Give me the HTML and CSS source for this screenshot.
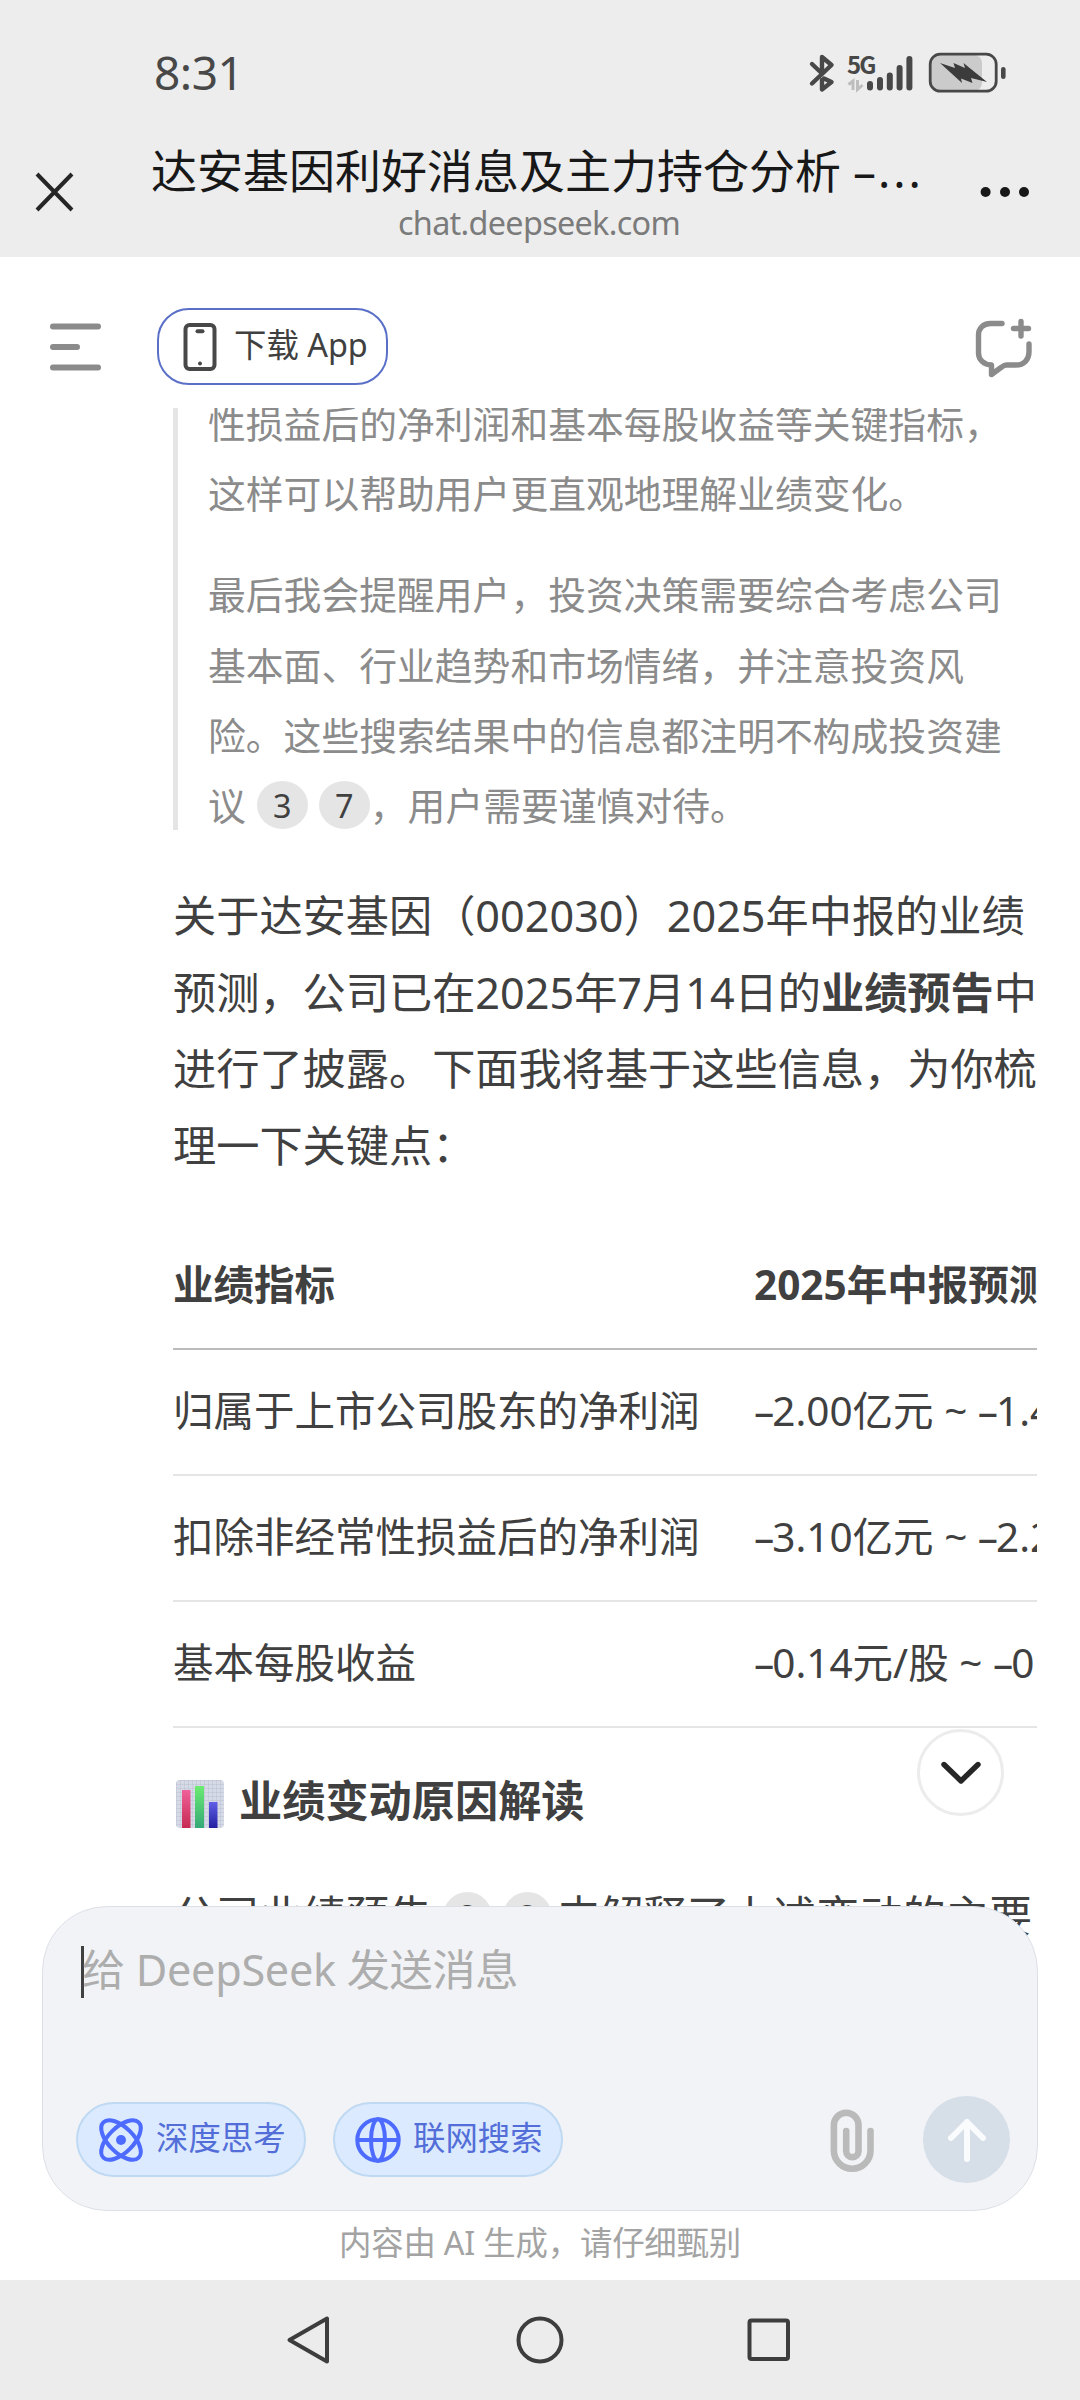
FILE: index.html
```html
<!DOCTYPE html>
<html lang="zh-CN">
<head>
    <meta charset="UTF-8">
    <meta name="viewport" content="width=device-width, initial-scale=1.0">
    <title>达安基因利好消息及主力持仓分析 - DeepSeek</title>
    <link rel="stylesheet" href="styles.css">
</head>
<body>
    <div class="phone">
        <header class="browser-header">
            <div class="status-bar">
                <span class="clock">8:31</span>
                <div class="status-icons">
                    <svg class="bluetooth" width="26" height="38" viewBox="0 0 26 38" fill="none" stroke="#484848" stroke-width="4.4" stroke-linecap="round" stroke-linejoin="round">
                        <path d="M3 10 13 19.500 13 3 22.500 11 3 29.500"/>
                        <path d="M15 24.500 22.500 28 13 35.500V26"/>
                    </svg>
                    <div class="network">
                        <span class="network-type">5G</span>
                        <svg width="66" height="38" viewBox="0 0 66 38" fill="none">
                            <path d="M6 36V27L1.500 30.500M10.500 26V35.500L15.500 31" stroke="#bdbdbd" stroke-width="3"/>
                            <path d="M23 30V33.500M33 26V33.500M42.800 21.500V33.500M52.600 14V33.500M62.400 5V33.500" stroke="#484848" stroke-width="6" stroke-linecap="round"/>
                        </svg>
                    </div>
                    <svg class="battery" width="80" height="42" viewBox="0 0 80 42">
                        <rect x="3" y="3" width="51" height="36" rx="8" fill="#cbcbcb"/>
                        <rect x="2.200" y="2.200" width="66" height="37" rx="10" fill="none" stroke="#484848" stroke-width="2.800"/>
                        <rect x="73" y="15" width="4.600" height="12" rx="2.300" fill="#484848"/>
                        <path d="M12 11 27 16 25.500 11 37 16 35.500 11 59 30 43 26 44.500 31 33 26.500 34 31Z" fill="#3b3b3b"/>
                    </svg>
                </div>
            </div>
            <div class="title-bar">
                <svg class="close" width="40" height="40" viewBox="0 0 40 40" stroke="#262626" stroke-width="4">
                    <path d="M2 2 37 38M37 2 2 38"/>
                </svg>
                <div class="page-title">
                    <h1>达安基因利好消息及主力持仓分析 –<span class="dots">...</span></h1>
                    <p>chat.deepseek.com</p>
                </div>
                <svg class="more" width="50" height="12" viewBox="0 0 50 12" fill="#181818">
                    <circle cx="6.600" cy="6" r="5"/>
                    <circle cx="26" cy="6" r="5"/>
                    <circle cx="45" cy="6" r="5"/>
                </svg>
            </div>
        </header>

        <main>
            <div class="toolbar">
                <svg class="menu" width="52" height="50" viewBox="0 0 52 50" stroke="#8b8b8b" stroke-width="6" stroke-linecap="round">
                    <path d="M3 4.500H48M3 25H27M3 45.500H48"/>
                </svg>
                <button class="download">
                    <svg width="34" height="50" viewBox="0 0 34 50" fill="none" stroke="#484848" stroke-width="4">
                        <rect x="2.500" y="3" width="29" height="44" rx="4"/>
                        <path d="M14.500 9.300H19.500" stroke-linecap="round"/>
                        <circle cx="17" cy="41.500" r="2" fill="#484848" stroke="none"/>
                    </svg>
                    <span>下载 App</span>
                </button>
                <svg class="new-chat" width="60" height="62" viewBox="0 0 60 62" fill="none" stroke="#8b8b8b" stroke-width="5.400" stroke-linecap="round" stroke-linejoin="round">
                    <path d="M27 6.500H15.500C8 6.500 3.500 11.500 3.500 18V36C3.500 43 9 47.500 16.500 48V57.500L26 50.500C28 49 29 48 31.500 48H41C49 48 54 42.500 54 35V27"/>
                    <path d="M46 4.500V19M38.500 11.500H53.500"/>
                </svg>
            </div>

            <div class="chat">
                <blockquote>
                    <p>性损益后的净利润和基本每股收益等关键指标，<br>这样可以帮助用户更直观地理解业绩变化。</p>
                    <p>最后我会提醒用户，投资决策需要综合考虑公司<br>基本面、行业趋势和市场情绪，并注意投资风<br>险。这些搜索结果中的信息都注明不构成投资建<br>议<span class="cite">3</span><span class="cite">7</span>，用户需要谨慎对待。</p>
                </blockquote>

                <p class="answer">关于达安基因（002030）2025年中报的业绩<br>预测，公司已在2025年7月14日的<strong>业绩预告</strong>中<br>进行了披露。下面我将基于这些信息，为你梳<br>理一下关键点：</p>

                <div class="table-scroll">
                    <table>
                        <thead>
                            <tr><th>业绩指标</th><th>2025年中报预测</th></tr>
                        </thead>
                        <tbody>
                            <tr><td>归属于上市公司股东的净利润</td><td><i>–</i>2.00亿元 ~ <i>–</i>1.4</td></tr>
                            <tr><td>扣除非经常性损益后的净利润</td><td><i>–</i>3.10亿元 ~ <i>–</i>2.2</td></tr>
                            <tr><td>基本每股收益</td><td><i>–</i>0.14元/股 ~ <i>–</i>0</td></tr>
                        </tbody>
                    </table>
                </div>

                <h3>
                    <svg width="48" height="48" viewBox="0 0 48 48">
                        <defs>
                            <linearGradient id="red" x2="0" y2="1"><stop stop-color="#f0609a"/><stop offset="1" stop-color="#c62a52"/></linearGradient>
                            <linearGradient id="green" x2="0" y2="1"><stop stop-color="#6cec70"/><stop offset="1" stop-color="#35a878"/></linearGradient>
                            <linearGradient id="blue" x2="0" y2="1"><stop stop-color="#6060e8"/><stop offset="1" stop-color="#2420a0"/></linearGradient>
                            <pattern id="squares" width="4" height="4" patternUnits="userSpaceOnUse"><path d="M0 0H4M0 0V4" stroke="#b9c0d0"/></pattern>
                        </defs>
                        <rect width="48" height="48" rx="4" fill="#d6dae6"/>
                        <rect width="48" height="48" rx="4" fill="url(#squares)"/>
                        <rect x="6" y="10" width="8.500" height="38" fill="url(#red)"/>
                        <rect x="19" y="6" width="9" height="42" fill="url(#green)"/>
                        <rect x="33" y="22" width="8.500" height="26" fill="url(#blue)"/>
                    </svg>
                    <span>业绩变动原因解读</span>
                </h3>

                <p class="answer reasons">公司业绩预告<span class="cite">2</span><span class="cite">3</span>中解释了上述变动的主要</p>
            </div>

            <button class="scroll-down">
                <svg width="44" height="28" viewBox="0 0 44 28" fill="none" stroke="#262626" stroke-width="5.400" stroke-linecap="round" stroke-linejoin="round">
                    <path d="M5 5.500 22 22 39 5.500"/>
                </svg>
            </button>

            <footer class="composer">
                <div class="input-box">
                    <div class="placeholder">给 DeepSeek 发送消息</div>
                    <div class="actions">
                        <button class="chip">
                            <svg width="46" height="46" viewBox="0 0 46 46" fill="none" stroke="#4d6bfe" stroke-width="4">
                                <ellipse cx="23" cy="23" rx="25" ry="12.500" transform="rotate(45 23 23)"/>
                                <ellipse cx="23" cy="23" rx="25" ry="12.500" transform="rotate(-45 23 23)"/>
                                <circle cx="23" cy="23" r="5" fill="#4d6bfe" stroke="none"/>
                            </svg>
                            <span>深度思考</span>
                        </button>
                        <button class="chip">
                            <svg width="46" height="46" viewBox="0 0 46 46" fill="none" stroke="#4d6bfe" stroke-width="4">
                                <circle cx="23" cy="23" r="20.700"/>
                                <ellipse cx="23" cy="23" rx="7" ry="20.700"/>
                                <path d="M2 23H44"/>
                            </svg>
                            <span>联网搜索</span>
                        </button>
                        <svg class="attach" width="46" height="64" viewBox="0 0 46 64" fill="none" stroke="#bababa" stroke-width="6.600" stroke-linecap="round">
                            <path d="M41.500 23V42.500A18.300 18.300 0 0 1 4.900 42.500V17A12.300 12.300 0 0 1 29.500 17V43A6 6 0 0 1 17.200 43V23"/>
                        </svg>
                        <button class="send">
                            <svg width="40" height="46" viewBox="0 0 40 46" fill="none" stroke="#fafbfc" stroke-width="6" stroke-linecap="round" stroke-linejoin="round">
                                <path d="M20 42V5M4 21 20 5 36 21"/>
                            </svg>
                        </button>
                    </div>
                </div>
                <p class="notice">内容由 AI 生成，请仔细甄别</p>
            </footer>
        </main>

        <nav class="system-nav">
            <svg width="48" height="52" viewBox="0 0 48 52" fill="none" stroke="#3d3d3d" stroke-width="4" stroke-linejoin="round">
                <path d="M4.500 26 42 4.500V47.500Z"/>
            </svg>
            <svg width="48" height="52" viewBox="0 0 48 52" fill="none" stroke="#3d3d3d" stroke-width="4">
                <circle cx="24" cy="26" r="21.500"/>
            </svg>
            <svg width="48" height="52" viewBox="0 0 48 52" fill="none" stroke="#3d3d3d" stroke-width="4">
                <rect x="2.500" y="6.500" width="38.500" height="38.500" rx="2"/>
            </svg>
        </nav>
    </div>
</body>
</html>
```

FILE: styles.css
```css
:root {
    --text: #404040;
    --muted: #8b8b8b;
    --line: #e5e5e5;
    --bar: #ededed;
    --primary: #4d6bfe;
}

* {
    box-sizing: border-box;
    margin: 0;
    padding: 0;
}

body {
    font-family: 'Noto Sans', 'Noto Sans CJK SC', sans-serif;
    color: var(--text);
    background: #fff;
}

svg {
    display: block;
    flex-shrink: 0;
    overflow: visible;
}

button {
    font: inherit;
    color: inherit;
    background: none;
    border: none;
}

.phone {
    width: 1080px;
    height: 2400px;
    display: flex;
    flex-direction: column;
    overflow: hidden;
}

/* status bar + browser title */
.browser-header {
    height: 257px;
    background: var(--bar);
}

.status-bar {
    height: 140px;
    padding: 6px 72px 0 154px;
    display: flex;
    align-items: center;
    justify-content: space-between;
}

.clock {
    margin-bottom: 2px;
    font-size: 46px;
    line-height: 60px;
    color: #484848;
    letter-spacing: -0.5px;
}

.status-icons {
    display: flex;
    align-items: center;
}

.network {
    position: relative;
    margin: 0 15px 0 12px;
}

.network-type {
    position: absolute;
    top: -3px;
    left: 0;
    font: 700 24px/26px 'Noto Sans CJK SC', sans-serif;
    letter-spacing: -2px;
    color: #484848;
}

.title-bar {
    height: 117px;
    display: flex;
    align-items: flex-start;
    padding-left: 35px;
}

.close {
    margin-top: 32px;
}

.page-title {
    width: 776px;
    margin: 0 52px 0 76px;
    text-align: center;
}

.page-title h1 {
    font-size: 46px;
    font-weight: 400;
    line-height: 60px;
    color: #181818;
    text-align: left;
    white-space: nowrap;
}

.dots {
    letter-spacing: 3px;
    margin-left: 2px;
}

.page-title p {
    font-size: 32.4px;
    line-height: 45px;
    letter-spacing: -0.7px;
    color: #7b7b7b;
}

.more {
    margin-top: 46px;
}

main {
    position: relative;
    height: 2023px;
    overflow: hidden;
}

.toolbar {
    height: 151px;
    padding: 51px 45px 0 50px;
    display: flex;
    align-items: flex-start;
}

.menu {
    margin-top: 14px;
}

.download {
    width: 231px;
    height: 77px;
    margin-left: 55px;
    padding-left: 24px;
    display: flex;
    align-items: center;
    gap: 17px;
    border: 2px solid #5a6fc8;
    border-radius: 32px;
    font-size: 32.4px;
    line-height: 44px;
    white-space: nowrap;
}

.download span {
    position: relative;
    top: -3px;
}

.new-chat {
    margin: 9px 0 0 auto;
}

/* messages */
.chat {
    height: 1872px;
    padding: 0 43px 0 173px;
    overflow: hidden;
}

blockquote {
    height: 441px;
    margin-bottom: 48px;
    padding-left: 30px;
    border-left: 5px solid var(--line);
    font-size: 37.8px;
    line-height: 70.2px;
    color: var(--muted);
    white-space: nowrap;
}

blockquote p:first-child {
    margin: -19px 0 31px;
}

.cite {
    display: inline-block;
    width: 49px;
    height: 49px;
    margin-left: 12px;
    border-radius: 50%;
    background: var(--line);
    color: var(--text);
    font-size: 32.4px;
    line-height: 49px;
    text-align: center;
    vertical-align: 3px;
}

blockquote .cite {
    width: 51px;
    height: 48px;
    line-height: 48px;
    margin-left: 11px;
    vertical-align: 2px;
}

.answer {
    font-size: 43.2px;
    line-height: 76.6px;
    white-space: nowrap;
}

.table-scroll {
    margin-top: 40px;
    overflow: hidden;
}

table {
    width: 1100px;
    table-layout: fixed;
    border-collapse: separate;
    border-spacing: 0;
    font-size: 40.5px;
    line-height: 60px;
}

th, td {
    height: 126px;
    padding-bottom: 3px;
    border-bottom: 2px solid var(--line);
    text-align: left;
    white-space: nowrap;
}

th:first-child {
    width: 581px;
}

th {
    border-bottom-color: #bbb;
}

td i {
    font-style: normal;
    letter-spacing: -2px;
}

h3 {
    height: 120px;
    padding: 31px 0 0 3px;
    display: flex;
    align-items: center;
    gap: 15px;
    font-size: 43.2px;
    line-height: 76px;
}

h3 span {
    position: relative;
    top: -3px;
}

.reasons {
    margin-top: 30px;
}

.reasons .cite {
    margin-left: 11px;
}

.reasons .cite:last-child {
    margin-right: 5px;
}

.scroll-down {
    position: absolute;
    top: 1472px;
    right: 76px;
    width: 87px;
    height: 87px;
    display: flex;
    align-items: center;
    justify-content: center;
    background: #fff;
    border: 3px solid #ececec;
    border-radius: 50%;
}

/* message input */
.composer {
    position: absolute;
    bottom: 0;
    left: 42px;
    width: 996px;
    height: 374px;
    display: flex;
    flex-direction: column;
}

.input-box {
    height: 305px;
    padding: 33px 27px 27px 33px;
    display: flex;
    flex-direction: column;
    justify-content: space-between;
    background: #f2f3f6;
    border: 1px solid #dce0e6;
    border-radius: 65px;
}

.placeholder {
    height: 60px;
    margin: 0 5px;
    font-size: 43.2px;
    line-height: 60px;
    letter-spacing: -0.3px;
    color: #adadad;
}

.placeholder::before {
    content: '';
    display: inline-block;
    width: 3px;
    height: 52px;
    margin-right: -2px;
    background: var(--text);
    vertical-align: -12px;
}

.actions {
    display: flex;
    align-items: center;
}

.chip {
    width: 230px;
    height: 75px;
    margin-right: 27px;
    padding-left: 20px;
    display: flex;
    align-items: center;
    gap: 12px;
    font-size: 32.4px;
    line-height: 44px;
    color: #536ed8;
    background: #dbeafe;
    border: 2px solid #bfd9f3;
    border-radius: 38px;
}

.chip span {
    position: relative;
    top: -3px;
}

.attach {
    margin: 0 48px 0 auto;
}

.send {
    width: 87px;
    height: 87px;
    display: flex;
    align-items: center;
    justify-content: center;
    background: #d6dee8;
    border-radius: 50%;
}

.notice {
    height: 69px;
    font-size: 32.4px;
    line-height: 62px;
    letter-spacing: -0.2px;
    text-align: center;
    color: #a3a3a3;
}

.system-nav {
    height: 120px;
    padding: 0 285px;
    display: flex;
    align-items: center;
    justify-content: space-between;
    background: #ececec;
}
```
